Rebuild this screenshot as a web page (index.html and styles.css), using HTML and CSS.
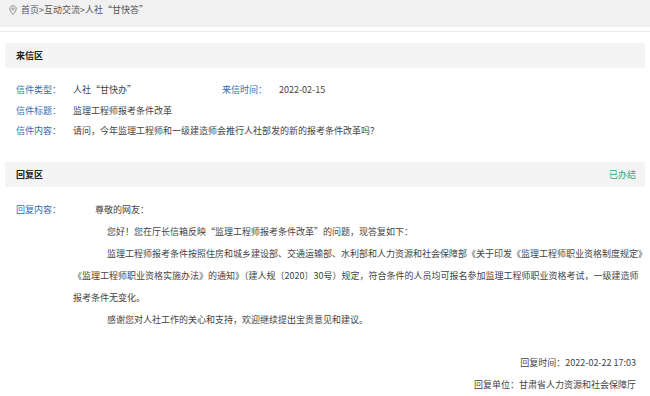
FILE: index.html
```html
<!DOCTYPE html>
<html lang="zh-CN">
<head>
<meta charset="utf-8">
<title>人社“甘快答”</title>
<link rel="stylesheet" href="styles.css">
</head>
<body>
<nav class="crumb">
  <svg class="pin" width="8" height="10" viewBox="0 0 8 10" aria-hidden="true">
    <path d="M4 0.7C2.2 0.7 0.8 2.1 0.8 3.9c0 2.4 3.2 5.5 3.2 5.5s3.2-3.1 3.2-5.5C7.2 2.1 5.8 0.7 4 0.7z" fill="none" stroke="#8a8a8a" stroke-width="1"/>
    <circle cx="4" cy="3.9" r="1.1" fill="none" stroke="#8a8a8a" stroke-width="0.9"/>
  </svg>
  <span>首页&gt;互动交流&gt;人社“甘快答”</span>
</nav>
<div class="divider"></div>
<main class="main">
  <section>
    <div class="bar"><span>来信区</span></div>
    <div class="info">
      <span class="label">信件类型：</span>
      <span class="value">人社“甘快办”</span>
      <span class="label">来信时间：</span>
      <span class="value">2022-02-15</span>
      <span class="label">信件标题：</span>
      <span class="value wide">监理工程师报考条件改革</span>
      <span class="label">信件内容：</span>
      <span class="value wide">请问，今年监理工程师和一级建造师会推行人社部发的新的报考条件改革吗？</span>
    </div>
  </section>
  <section>
    <div class="bar"><span>回复区</span><span class="status">已办结</span></div>
    <div class="reply">
      <span class="label">回复内容：</span>
      <div class="reply-text">
        <p class="greet">尊敬的网友：</p>
        <p class="indent">您好！您在厅长信箱反映“监理工程师报考条件改革”的问题，现答复如下：</p>
        <p class="indent nowrap">监理工程师报考条件按照住房和城乡建设部、交通运输部、水利部和人力资源和社会保障部《关于印发《监理工程师职业资格制度规定》<br>《监理工程师职业资格实施办法》的通知》（建人规〔2020〕30号）规定，符合条件的人员均可报名参加监理工程师职业资格考试，一级建造师<br>报考条件无变化。</p>
        <p class="indent">感谢您对人社工作的关心和支持，欢迎继续提出宝贵意见和建议。</p>
      </div>
    </div>
    <div class="sign">
      <p>回复时间：2022-02-22 17:03</p>
      <p>回复单位：甘肃省人力资源和社会保障厅</p>
    </div>
  </section>
</main>
</body>
</html>
```

FILE: styles.css
```css
* { box-sizing: border-box; }
body {
  margin: 0;
  font-family: "Noto Sans CJK SC", "Noto Sans", sans-serif;
  font-size: 9px;
  color: #444;
  background: #fff;
}
p { margin: 0; }

.crumb {
  height: 27px;
  background: #f1f1f1;
  padding: 3px 10px 0 9px;
  display: flex;
  align-items: flex-start;
  gap: 4px;
  line-height: 14px;
  color: #555;
}
.pin { margin-top: 2px; flex: none; }

.divider {
  margin-top: 4px;
  height: 1px;
  background: #ececec;
}

.main { padding: 11px 5px 0; }

.bar {
  height: 25px;
  background: #f4f4f4;
  padding: 0 9px 0 11px;
  display: flex;
  align-items: center;
  justify-content: space-between;
  font-weight: bold;
  color: #222;
}
section + section .bar { margin-top: 20px; }
.status { font-weight: normal; color: #2fa57a; }

.label { color: #2f6cb3; }

.info {
  display: grid;
  grid-template-columns: 57px 149px 57px auto;
  padding: 12px 11px 0;
  line-height: 20.5px;
}
.info .wide { grid-column: 2 / 5; }

.reply {
  display: grid;
  grid-template-columns: 57px auto;
  padding: 12px 11px 0;
  line-height: 22px;
}
.greet { padding-left: 22px; }
.indent { text-indent: 34px; }
.nowrap { white-space: nowrap; }

.sign {
  margin-top: 21px;
  padding-right: 9px;
  text-align: right;
  line-height: 22px;
}
```
